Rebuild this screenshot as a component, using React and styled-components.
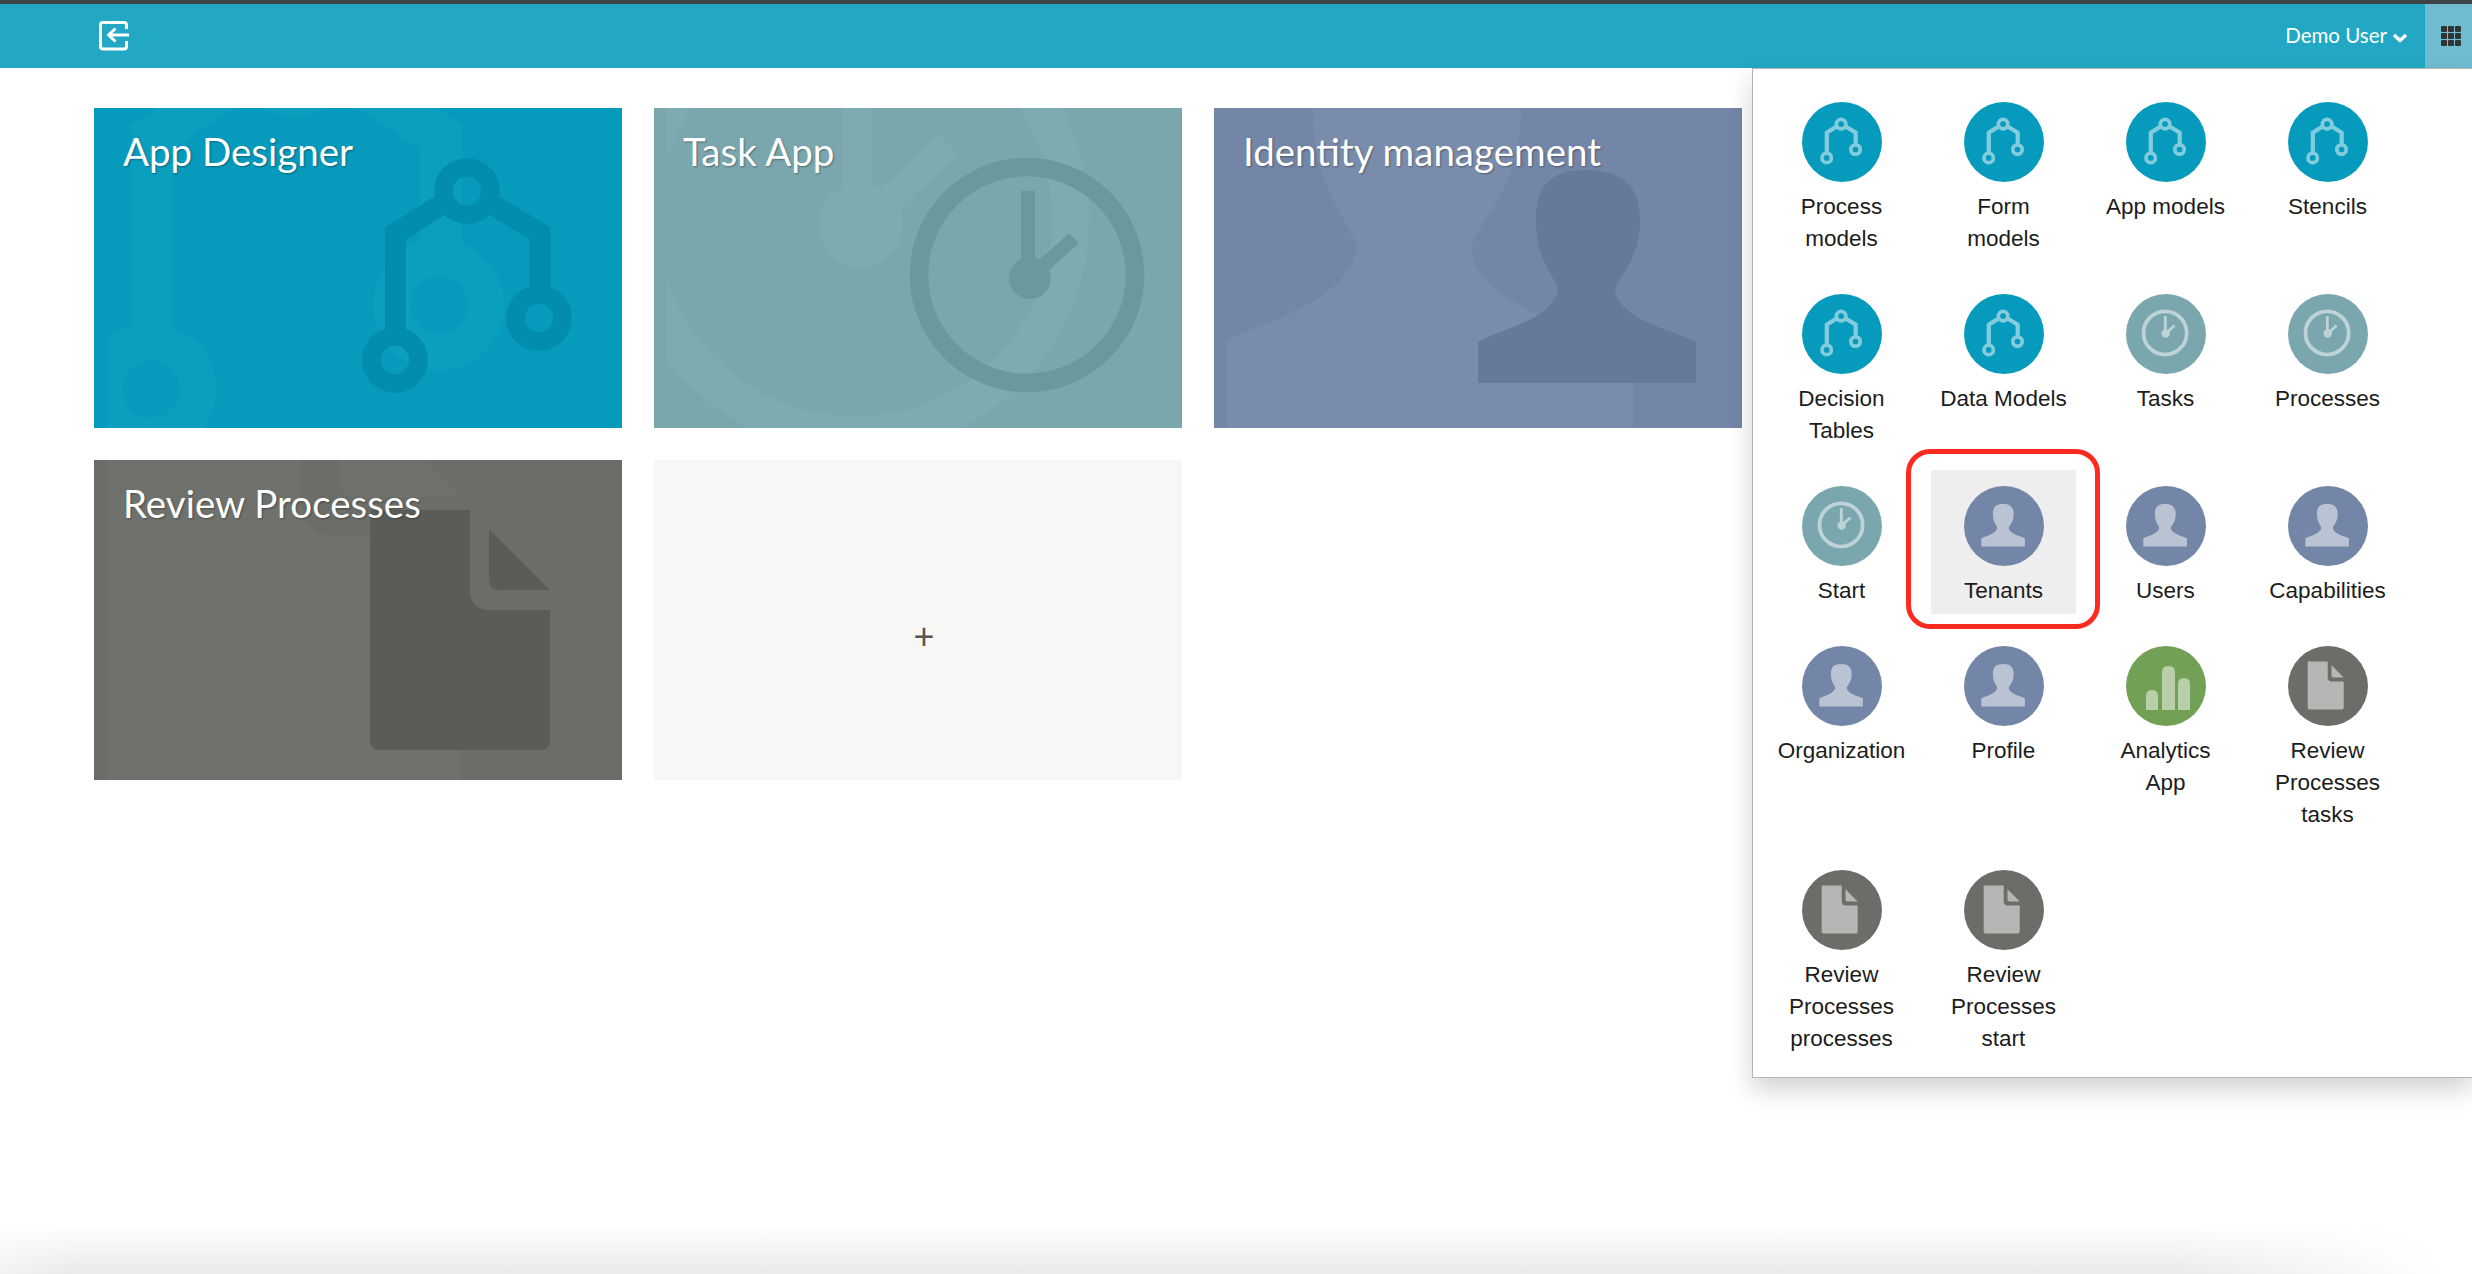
import React from 'react'
import styled, { createGlobalStyle } from 'styled-components'

const colors = {
  process: { bg: '#069abc', dark: '#028cad', soft: '#0a9fbf' },
  clock: { bg: '#7aa7ae', dark: '#69989f', soft: '#7eaab1' },
  person: { bg: '#7386a8', dark: '#66799a', soft: '#7a8cac' },
  doc: { bg: '#6b6e68', dark: '#5a5d57', soft: '#6f726c' },
  bars: { bg: '#72a055' },
}

const ProcessArt = ({ color }) => (
  <g fill="none" stroke={color}>
    <path strokeWidth="21" d="M301.5 232V125.5L350 95M446 190V125.5L396 95" />
    <circle strokeWidth="18.5" cx="373" cy="83" r="23.5" />
    <circle strokeWidth="18.5" cx="301" cy="252" r="23.5" />
    <circle strokeWidth="18.5" cx="445" cy="210" r="23.5" />
  </g>
)

const ClockArt = ({ color }) => (
  <g fill={color}>
    <circle cx="373" cy="167" r="108" fill="none" stroke={color} strokeWidth="18.5" />
    <circle cx="376" cy="170" r="21" />
    <rect x="367" y="83" width="14" height="87" />
    <path d="M376 170L420 130" stroke={color} strokeWidth="14" />
  </g>
)

const PersonArt = ({ color }) => (
  <path
    fill={color}
    d="M264 275V234C285 222 338 212 344 182C344 172 322 155 322 112C322 76 338 62 373 62C408 62 426 78 426 112C426 155 401 172 401 182C405 212 460 222 482 234V275Z"
  />
)

const DocArt = ({ color }) => (
  <g fill={color}>
    <path d="M276 50H376V130Q376 150 396 150H456V280Q456 290 446 290H286Q276 290 276 280Z" />
    <path d="M395 69L456 130H405Q395 130 395 120Z" />
  </g>
)

const BarsArt = ({ color }) => (
  <g fill={color}>
    <path d="M20 64V50Q20 44 26 44Q32 44 32 50V64Z" />
    <path d="M36 64V26Q36 20 42.500 20Q49 20 49 26V64Z" />
    <path d="M52 64V38Q52 32 58 32Q64 32 64 38V64Z" />
  </g>
)

const arts = { process: ProcessArt, clock: ClockArt, person: PersonArt, doc: DocArt }

const tiles = [
  { title: 'App Designer', kind: 'process' },
  { title: 'Task App', kind: 'clock' },
  { title: 'Identity management', kind: 'person' },
  { title: 'Review Processes', kind: 'doc' },
]

const menu = [
  { label: 'Process models', kind: 'process' },
  { label: 'Form models', kind: 'process' },
  { label: 'App models', kind: 'process' },
  { label: 'Stencils', kind: 'process' },
  { label: 'Decision Tables', kind: 'process' },
  { label: 'Data Models', kind: 'process' },
  { label: 'Tasks', kind: 'clock' },
  { label: 'Processes', kind: 'clock' },
  { label: 'Start', kind: 'clock' },
  { label: 'Tenants', kind: 'person', active: true },
  { label: 'Users', kind: 'person' },
  { label: 'Capabilities', kind: 'person' },
  { label: 'Organization', kind: 'person' },
  { label: 'Profile', kind: 'person' },
  { label: 'Analytics App', kind: 'bars' },
  { label: 'Review Processes tasks', kind: 'doc' },
  { label: 'Review Processes processes', kind: 'doc' },
  { label: 'Review Processes start', kind: 'doc' },
]

const TileArt = ({ kind }) => {
  const Art = arts[kind]
  const clipId = `tile-clip-${kind}`
  return (
    <TileSvg viewBox="0 0 528 320">
      <clipPath id={clipId}>
        <rect x="13" y="0" width="515" height="320" />
      </clipPath>
      <g clipPath={`url(#${clipId})`}>
        <g transform="translate(-545 -223) scale(2)">
          <Art color={colors[kind].soft} />
        </g>
      </g>
      <Art color={colors[kind].dark} />
    </TileSvg>
  )
}

const MenuIcon = ({ kind }) => {
  if (kind === 'bars') {
    return (
      <IconSvg viewBox="0 0 80 80">
        <circle cx="40" cy="40" r="40" fill={colors.bars.bg} />
        <g opacity="0.5">
          <BarsArt color="#fff" />
        </g>
      </IconSvg>
    )
  }
  const Art = arts[kind]
  return (
    <IconSvg viewBox="0 0 80 80">
      <circle cx="40" cy="40" r="40" fill={colors[kind].bg} />
      <g opacity="0.5" transform="translate(-35.500 5.500) scale(0.2)">
        <Art color="#fff" />
      </g>
    </IconSvg>
  )
}

const App = () => {
  return (
    <Page>
      <GlobalStyle />
      <Header>
        <BackIcon viewBox="0 0 30 30">
          <path d="M27.500 8V4Q27.500 1.500 25 1.500H4Q1.500 1.500 1.500 4V25.500Q1.500 28 4 28H25Q27.500 28 27.500 25.500V20" />
          <path d="M30 14H10M16.500 7.500L9.500 14L16.500 20.500" />
        </BackIcon>
        <UserMenu>
          Demo User
          <Chevron viewBox="0 0 16 10">
            <path d="M2 2L8 7.500L14 2" />
          </Chevron>
        </UserMenu>
        <AppsButton>
          <AppsIcon>
            {Array.from({ length: 9 }).map((_, i) => (
              <span key={i} />
            ))}
          </AppsIcon>
        </AppsButton>
        <Dropdown>
          {menu.map((item) => (
            <MenuItem key={item.label} $active={item.active}>
              <MenuIcon kind={item.kind} />
              <MenuLabel>{item.label}</MenuLabel>
              {item.active && <Highlight />}
            </MenuItem>
          ))}
        </Dropdown>
      </Header>
      <Tiles>
        {tiles.map((tile) => (
          <Tile key={tile.title} $bg={colors[tile.kind].bg}>
            <TileArt kind={tile.kind} />
            <TileTitle>{tile.title}</TileTitle>
          </Tile>
        ))}
        <AddTile>+</AddTile>
      </Tiles>
      <BottomShade />
    </Page>
  )
}

export default App

const GlobalStyle = createGlobalStyle`
  html, body {
    margin: 0;
    padding: 0;
    background: #fff;
  }
  * {
    box-sizing: border-box;
  }
`

const Page = styled.div`
  position: relative;
  width: 2472px;
  height: 1274px;
  overflow: hidden;
  background: #fff;
  font-family: Lato, 'Liberation Sans', sans-serif;
`

const Header = styled.header`
  position: relative;
  z-index: 2;
  display: flex;
  align-items: center;
  height: 68px;
  padding-left: 99px;
  background: #22a8c4;
  border-top: 4px solid #3e4448;
`

const BackIcon = styled.svg`
  width: 30px;
  height: 30px;
  fill: none;
  stroke: #fff;
  stroke-width: 3;
  stroke-linejoin: round;
`

const UserMenu = styled.div`
  display: flex;
  align-items: center;
  gap: 5px;
  margin-top: -2px;
  margin-left: auto;
  margin-right: 17px;
  color: #fff;
  font-size: 20.500px;
`

const Chevron = styled.svg`
  width: 16px;
  height: 10px;
  margin-top: 5px;
  fill: none;
  stroke: #fff;
  stroke-width: 3.500;
`

const AppsButton = styled.div`
  display: flex;
  align-items: center;
  justify-content: center;
  width: 47px;
  height: 100%;
  padding-left: 5px;
  background: #6fbcd2;
`

const AppsIcon = styled.div`
  display: grid;
  grid-template-columns: repeat(3, 5.500px);
  grid-auto-rows: 5.500px;
  gap: 1.500px;
  span {
    background: #333;
    border-radius: 1px;
  }
`

const Dropdown = styled.div`
  position: absolute;
  top: 64px;
  right: 0;
  display: grid;
  grid-template-columns: repeat(4, 145px);
  column-gap: 17px;
  row-gap: 16px;
  align-items: start;
  align-content: start;
  width: 720px;
  height: 1010px;
  padding: 17px 0 0 16px;
  background: #fff;
  border: 1px solid #b4b4b4;
  border-right: 0;
  box-shadow: 0 12px 24px rgba(0, 0, 0, 0.175);
`

const MenuItem = styled.div`
  position: relative;
  display: flex;
  flex-direction: column;
  align-items: center;
  padding: 16px 9px 7px;
  background: ${(p) => (p.$active ? '#eeeeee' : 'transparent')};
`

const IconSvg = styled.svg`
  display: block;
  width: 80px;
  height: 80px;
  margin-bottom: 9px;
`

const MenuLabel = styled.div`
  color: #1c1c1c;
  font-family: 'Liberation Sans', Arial, sans-serif;
  font-size: 22.500px;
  line-height: 32px;
  text-align: center;
`

const Highlight = styled.div`
  position: absolute;
  top: -21px;
  right: -24px;
  bottom: -15px;
  left: -25px;
  border: 5px solid #ff2a1f;
  border-radius: 24px;
`

const Tiles = styled.main`
  display: flex;
  flex-wrap: wrap;
  gap: 32px;
  width: 1742px;
  padding: 40px 0 0 94px;
`

const Tile = styled.div`
  position: relative;
  width: 528px;
  height: 320px;
  padding: 18px 29px;
  overflow: hidden;
  background: ${(p) => p.$bg};
`

const TileSvg = styled.svg`
  position: absolute;
  top: 0;
  left: 0;
  width: 528px;
  height: 320px;
`

const TileTitle = styled.h2`
  position: relative;
  margin: 0;
  color: #fff;
  font-size: 38.500px;
  font-weight: 400;
  line-height: 50px;
  text-shadow: 1px 1px 2px rgba(0, 0, 0, 0.35);
`

const AddTile = styled.div`
  display: flex;
  align-items: center;
  justify-content: center;
  width: 528px;
  height: 320px;
  padding: 30px 0 0 12px;
  background: #f7f7f5;
  color: #555;
  font-size: 36px;
`

const BottomShade = styled.div`
  position: absolute;
  right: 0;
  bottom: 0;
  left: 0;
  z-index: 3;
  height: 50px;
  pointer-events: none;
  background: linear-gradient(to bottom, rgba(230, 230, 230, 0), rgba(230, 230, 230, 0.85));
  mask-image: linear-gradient(to right, rgba(0, 0, 0, 0.6), #000 3%, #000 88%, transparent 99%);
`
